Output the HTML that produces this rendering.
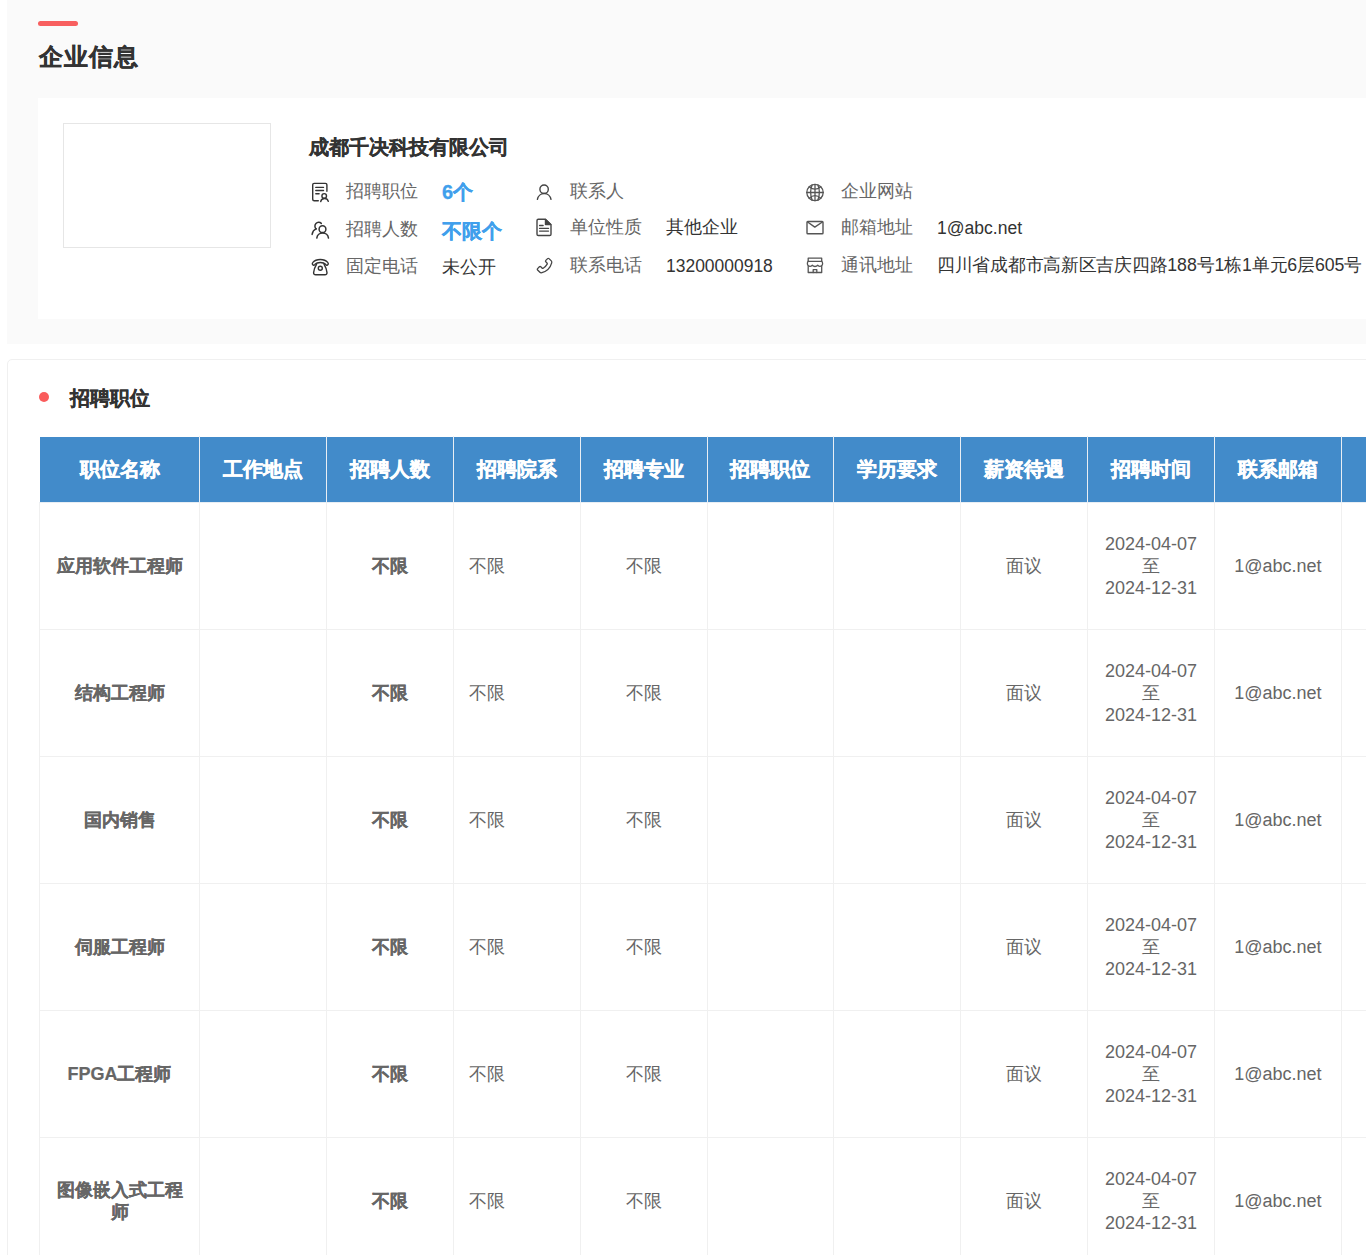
<!DOCTYPE html>
<html>
<head>
<meta charset="utf-8">
<style>
html,body{margin:0;padding:0;background:#fff;width:1366px;height:1255px;overflow:hidden;}
body{font-family:"Liberation Sans",sans-serif;position:relative;}
.abs{position:absolute;white-space:nowrap;}
#sec1{position:absolute;left:7px;top:0;width:1400px;height:344px;background:#fafafa;}
#bar{position:absolute;left:38px;top:21px;width:40px;height:5px;border-radius:3px;background:#f85f5f;}
#title{position:absolute;left:39px;top:41px;letter-spacing:1px;font-size:24px;line-height:32px;font-weight:bold;color:#333;-webkit-text-stroke:0.3px #333;}
#card1{position:absolute;left:38px;top:98px;width:1400px;height:221px;background:#fff;}
#logo{position:absolute;left:63px;top:123px;width:206px;height:123px;border:1px solid #e6e6e6;}
#cname{position:absolute;left:309px;top:134px;font-size:20px;line-height:26px;font-weight:bold;color:#333;-webkit-text-stroke:0.25px #333;}
.lbl{position:absolute;font-size:18px;line-height:24px;color:#666;white-space:nowrap;}
.val{position:absolute;font-size:18px;line-height:24px;color:#333;white-space:nowrap;}
.blue{color:#409fec;font-weight:bold;font-size:20px;-webkit-text-stroke:0.3px #409fec;}
.ic{position:absolute;}
#card2{position:absolute;left:7px;top:359px;width:1450px;height:1000px;border:1px solid #f0f0f0;border-radius:5px;background:#fff;}
#dot{position:absolute;left:39px;top:392px;width:10px;height:10px;border-radius:50%;background:#fa5c5c;}
#t2{position:absolute;left:70px;top:385px;font-size:20px;line-height:26px;font-weight:bold;color:#333;-webkit-text-stroke:0.25px #333;}
table{position:absolute;left:39px;top:436px;border-collapse:collapse;table-layout:fixed;width:1428.9px;}
th,td{border:1px solid #f0f0f0;padding:0 15px;text-align:center;vertical-align:middle;}
th{background:#428bca;color:#fff;font-size:20px;font-weight:bold;-webkit-text-stroke:0.45px #fff;height:65px;border-color:#e8eef4;border-top-color:#fff;border-left-color:#fff;}
td{height:126px;font-size:18px;color:#666;line-height:22px;}
td.n{font-weight:bold;color:#666;-webkit-text-stroke:0.2px #666;}
td.l{text-align:left;padding-left:15px;}
</style>
</head>
<body>
<div id="sec1"></div>
<div id="bar"></div>
<div id="title">企业信息</div>
<div id="card1"></div>
<div id="logo"></div>

<svg class="ic" style="left:306px;top:178px" width="28" height="28" viewBox="0 0 28 28" fill="none" stroke="#333" stroke-width="1.4" stroke-linecap="round" stroke-linejoin="round">
<path d="M12.3 22.8H8.2a1.5 1.5 0 0 1-1.5-1.5V6.85a1.5 1.5 0 0 1 1.5-1.5H19.4a1.5 1.5 0 0 1 1.5 1.5V13.3"/>
<path d="M9.8 9.4H17.5M9.8 12.5H17.5M9.8 15.8H13.1"/>
<circle cx="18.2" cy="17.9" r="2.3"/>
<path d="M14.7 23.6A3.9 3.9 0 0 1 22.3 23.4"/>
</svg>
<svg class="ic" style="left:306px;top:216px" width="28" height="28" viewBox="0 0 28 28" fill="none" stroke="#333" stroke-width="1.5" stroke-linecap="round" stroke-linejoin="round">
<circle cx="16.5" cy="13.2" r="3.4"/>
<path d="M10.8 22.1a5.9 5.9 0 0 1 11.7 0"/>
<path d="M15.3 7.4A3.3 3.3 0 1 0 10.1 12.9"/>
<path d="M10.1 12.9C8 13.8 6.5 15.8 6.1 18.4"/>
</svg>
<svg class="ic" style="left:306px;top:253px" width="28" height="28" viewBox="0 0 28 28" fill="none" stroke="#333" stroke-width="1.4" stroke-linecap="round" stroke-linejoin="round">
<path d="M7.2 12.1C6.2 11.6 6 10.4 6.9 9.4 8.6 7.4 11.4 6.5 14.3 6.5S20 7.4 21.7 9.4C22.6 10.4 22.4 11.6 21.4 12.1 20.6 12.5 19.9 12.1 19.5 11.3 18.6 10.2 16.6 9.5 14.3 9.5S10 10.2 9.1 11.3C8.7 12.1 8 12.5 7.2 12.1Z"/>
<path d="M10.6 11.1C9 13.8 7.8 16.8 7.6 19.6 7.5 20.9 8.4 21.7 9.6 21.7H19C20.2 21.7 21.1 20.9 21 19.6 20.8 16.8 19.6 13.8 18 11.1"/>
<circle cx="14.3" cy="15.2" r="2"/>
</svg>

<svg class="ic" style="left:530px;top:178px" width="28" height="28" viewBox="0 0 28 28" fill="none" stroke="#444" stroke-width="1.4" stroke-linecap="round" stroke-linejoin="round">
<circle cx="14.1" cy="11.2" r="4.2"/>
<path d="M7.4 21.3a6.9 6.9 0 0 1 13.6 0"/>
</svg>
<svg class="ic" style="left:530px;top:213px" width="28" height="28" viewBox="0 0 28 28" fill="none" stroke="#444" stroke-width="1.4" stroke-linecap="round" stroke-linejoin="round">
<path d="M15.4 6.3H8.3A1.3 1.3 0 0 0 7 7.6V21.2A1.3 1.3 0 0 0 8.3 22.5H19.7A1.3 1.3 0 0 0 21 21.2V11.7L15.4 6.3Z"/>
<path d="M15.5 6.6V11.5H20.8Z" fill="#444"/>
<path d="M9.6 12.5H13.1M9.6 15.4H18.5M9.6 18.1H18.5"/>
</svg>
<svg class="ic" style="left:530px;top:251px" width="28" height="28" viewBox="0 0 28 28" fill="none" stroke="#444" stroke-width="1.3" stroke-linecap="round" stroke-linejoin="round">
<path d="M17.6 7.6C18 7.2 18.6 7.2 19 7.6L21.3 9.9C21.8 10.4 21.9 11.2 21.7 11.9 20.4 16.6 16.6 20.4 11.9 21.7 11.2 21.9 10.4 21.8 9.9 21.3L7.6 19C7.2 18.6 7.2 18 7.6 17.6L9.4 15.8C9.8 15.4 10.4 15.4 10.8 15.8L12 17C12.3 17.3 12.8 17.4 13.2 17.2 14.9 16.2 16.2 14.9 17.2 13.2 17.4 12.8 17.3 12.3 17 12L15.8 10.8C15.4 10.4 15.4 9.8 15.8 9.4Z"/>
</svg>

<svg class="ic" style="left:801px;top:178px" width="28" height="28" viewBox="0 0 28 28" fill="none" stroke="#555" stroke-width="1.3" stroke-linecap="round" stroke-linejoin="round">
<circle cx="14" cy="14.5" r="8.2"/>
<path d="M5.8 14.5H22.2"/>
<path d="M8.2 8.8Q14 13.5 19.8 8.8M8.2 20.2Q14 15 19.8 20.2"/>
<path d="M14 6.3V22.7"/>
<path d="M11.2 6.8Q8 14.5 11.2 22.2M16.8 6.8Q20 14.5 16.8 22.2"/>
</svg>
<svg class="ic" style="left:801px;top:213px" width="28" height="28" viewBox="0 0 28 28" fill="none" stroke="#555" stroke-width="1.4" stroke-linecap="round" stroke-linejoin="round">
<rect x="6" y="8.5" width="16" height="12.3" rx="0.8"/>
<path d="M6.6 9L13.8 14.1 21.4 9"/>
</svg>
<svg class="ic" style="left:801px;top:251px" width="28" height="28" viewBox="0 0 28 28" fill="none" stroke="#555" stroke-width="1.3" stroke-linecap="round" stroke-linejoin="round">
<path d="M7.2 7.2H20.7V10.3H7.2Z"/>
<path d="M7.2 10.3C6.1 11.5 6.1 13.6 7.2 14.6 8.3 15.5 10.2 15.3 11.3 14.3 12.2 15.3 13.4 15.5 14 15.5 14.6 15.5 15.8 15.3 16.7 14.3 17.8 15.3 19.7 15.5 20.8 14.6 21.9 13.6 21.9 11.5 20.7 10.3"/>
<path d="M7.2 15V21.5H20.7V15"/>
<path d="M12.2 21.5V18.6H15.8V21.5"/>
</svg>
<div id="cname">成都千决科技有限公司</div>

<div class="lbl" style="left:346px;top:179px;">招聘职位</div>
<div class="val blue" style="left:442px;top:180px;">6个</div>
<div class="lbl" style="left:570px;top:179px;">联系人</div>
<div class="lbl" style="left:841px;top:179px;">企业网站</div>

<div class="lbl" style="left:346px;top:217px;">招聘人数</div>
<div class="val blue" style="left:442px;top:219px;">不限个</div>
<div class="lbl" style="left:570px;top:215px;">单位性质</div>
<div class="val" style="left:666px;top:215px;">其他企业</div>
<div class="lbl" style="left:841px;top:215px;">邮箱地址</div>
<div class="val" style="left:937px;top:216px;transform:scaleX(0.975);transform-origin:0 0;">1@abc.net</div>

<div class="lbl" style="left:346px;top:254px;">固定电话</div>
<div class="val" style="left:442px;top:255px;">未公开</div>
<div class="lbl" style="left:570px;top:253px;">联系电话</div>
<div class="val" style="left:666px;top:254px;transform:scaleX(0.97);transform-origin:0 0;">13200000918</div>
<div class="lbl" style="left:841px;top:253px;">通讯地址</div>
<div class="val" style="left:937px;top:253px;transform:scaleX(0.984);transform-origin:0 0;">四川省成都市高新区吉庆四路188号1栋1单元6层605号</div>

<div id="card2"></div>
<div id="dot"></div>
<div id="t2">招聘职位</div>
<table>
<colgroup><col style="width:160px"><col style="width:126.89px"><col style="width:126.89px"><col style="width:126.89px"><col style="width:126.89px"><col style="width:126.89px"><col style="width:126.89px"><col style="width:126.89px"><col style="width:126.89px"><col style="width:126.89px"><col style="width:126.89px"></colgroup>
<tr><th>职位名称</th><th>工作地点</th><th>招聘人数</th><th>招聘院系</th><th>招聘专业</th><th>招聘职位</th><th>学历要求</th><th>薪资待遇</th><th>招聘时间</th><th>联系邮箱</th><th></th></tr>
<tr><td class="n">应用软件工程师</td><td></td><td class="n">不限</td><td class="l">不限</td><td>不限</td><td></td><td></td><td>面议</td><td>2024-04-07<br>至<br>2024-12-31</td><td>1@abc.net</td><td></td></tr>
<tr><td class="n">结构工程师</td><td></td><td class="n">不限</td><td class="l">不限</td><td>不限</td><td></td><td></td><td>面议</td><td>2024-04-07<br>至<br>2024-12-31</td><td>1@abc.net</td><td></td></tr>
<tr><td class="n">国内销售</td><td></td><td class="n">不限</td><td class="l">不限</td><td>不限</td><td></td><td></td><td>面议</td><td>2024-04-07<br>至<br>2024-12-31</td><td>1@abc.net</td><td></td></tr>
<tr><td class="n">伺服工程师</td><td></td><td class="n">不限</td><td class="l">不限</td><td>不限</td><td></td><td></td><td>面议</td><td>2024-04-07<br>至<br>2024-12-31</td><td>1@abc.net</td><td></td></tr>
<tr><td class="n">FPGA工程师</td><td></td><td class="n">不限</td><td class="l">不限</td><td>不限</td><td></td><td></td><td>面议</td><td>2024-04-07<br>至<br>2024-12-31</td><td>1@abc.net</td><td></td></tr>
<tr><td class="n">图像嵌入式工程师</td><td></td><td class="n">不限</td><td class="l">不限</td><td>不限</td><td></td><td></td><td>面议</td><td>2024-04-07<br>至<br>2024-12-31</td><td>1@abc.net</td><td></td></tr>
</table>
</body>
</html>
